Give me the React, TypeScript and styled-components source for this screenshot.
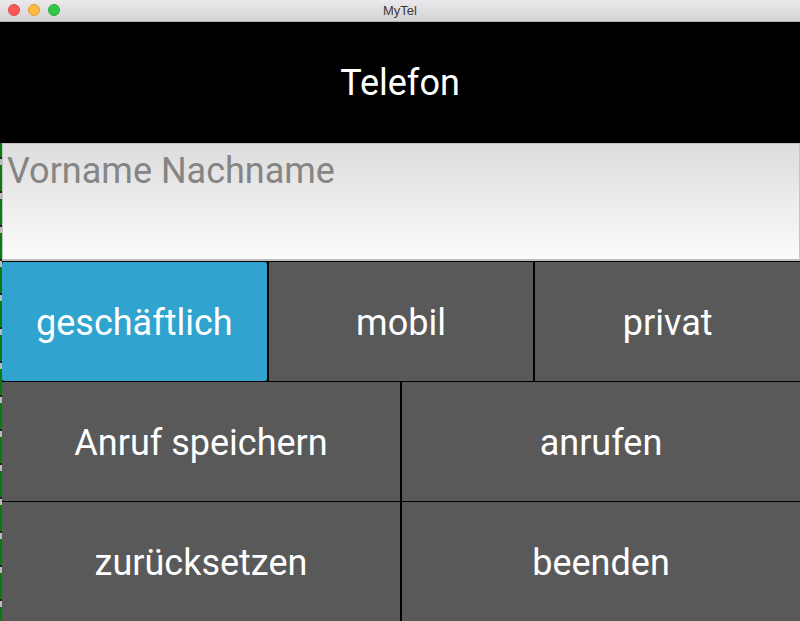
import React from "react";
import styled, { createGlobalStyle } from "styled-components";

const Global = createGlobalStyle`
  html, body { margin: 0; padding: 0; background: #ffffff; }
  body { font-family: Roboto, "Noto Sans", sans-serif; }
  * { box-sizing: border-box; }
`;

const Window = styled.div`
  width: 800px;
  height: 621px;
  display: flex;
  flex-direction: column;
  overflow: hidden;
  background: #000;
`;

const TitleBar = styled.div`
  position: relative;
  height: 22px;
  flex: 0 0 22px;
  background: linear-gradient(#ebe9eb, #d5d3d5);
  border-bottom: 1px solid #b4b2b4;
  display: flex;
  align-items: center;
  justify-content: center;
  font-family: "Liberation Sans", Arial, sans-serif;
  font-size: 13px;
  color: #3a3a3a;
`;

const Lights = styled.div`
  position: absolute;
  left: 8px;
  top: 4px;
  display: flex;
  gap: 8px;
`;

const Light = styled.span<{ $c: string; $b: string }>`
  width: 12px;
  height: 12px;
  border-radius: 50%;
  background: ${(p) => p.$c};
  border: 1px solid ${(p) => p.$b};
`;

const Header = styled.div`
  height: 121px;
  flex: 0 0 121px;
  background: #000;
  color: #fff;
  display: flex;
  align-items: center;
  justify-content: center;
  font-size: 36px;
`;

const Body = styled.div`
  flex: 1;
  display: flex;
`;

const EdgeStrip = styled.div`
  width: 2px;
  flex: 0 0 2px;
  background: repeating-linear-gradient(
    to bottom,
    #0a7a12 0px,
    #0a7a12 14px,
    #222 14px,
    #222 16px,
    #bbb 16px,
    #bbb 22px,
    #0a7a12 22px,
    #0a7a12 34px
  );
`;

const Column = styled.div`
  flex: 1;
  display: flex;
  flex-direction: column;
`;

const NameInput = styled.input`
  height: 118px;
  flex: 0 0 118px;
  width: 100%;
  border: 1px solid #c4c4c4;
  border-bottom: 2px solid #bdbdbd;
  background: linear-gradient(#dddddd, #fbfbfb);
  padding: 6px 4px 0 4px;
  margin: 0;
  font-family: Roboto, "Noto Sans", sans-serif;
  font-size: 36px;
  color: #333;
  outline: none;
  display: block;
  text-align: left;
  line-height: 42px;
  padding-bottom: 67px;
  &::placeholder { color: #858585; }
`;

const Row = styled.div<{ $cols: number }>`
  height: 120px;
  flex: 0 0 120px;
  display: grid;
  grid-template-columns: repeat(${(p) => p.$cols}, 1fr);
  gap: 2px;
  padding-top: 1px;
  background: #000;
`;

const Btn = styled.button<{ $active?: boolean }>`
  border: none;
  margin: 0;
  background: ${(p) => (p.$active ? "#31a3cf" : "#595959")};
  color: #fff;
  font-family: Roboto, "Noto Sans", sans-serif;
  font-size: 36px;
  display: flex;
  align-items: center;
  justify-content: center;
  padding: 2px 0 0 0;
  border-radius: ${(p) => (p.$active ? "2px" : "0")};
  cursor: pointer;
`;

export default function App() {
  return (
    <Window>
      <Global />
      <TitleBar>
        <Lights>
          <Light $c="#fc5753" $b="#df4744" />
          <Light $c="#fdbc40" $b="#de9f34" />
          <Light $c="#33c748" $b="#27aa35" />
        </Lights>
        MyTel
      </TitleBar>
      <Header>Telefon</Header>
      <Body>
        <EdgeStrip />
        <Column>
          <NameInput placeholder="Vorname Nachname" />
          <Row $cols={3}>
            <Btn $active>geschäftlich</Btn>
            <Btn>mobil</Btn>
            <Btn>privat</Btn>
          </Row>
          <Row $cols={2}>
            <Btn>Anruf speichern</Btn>
            <Btn>anrufen</Btn>
          </Row>
          <Row $cols={2}>
            <Btn>zurücksetzen</Btn>
            <Btn>beenden</Btn>
          </Row>
        </Column>
      </Body>
    </Window>
  );
}
